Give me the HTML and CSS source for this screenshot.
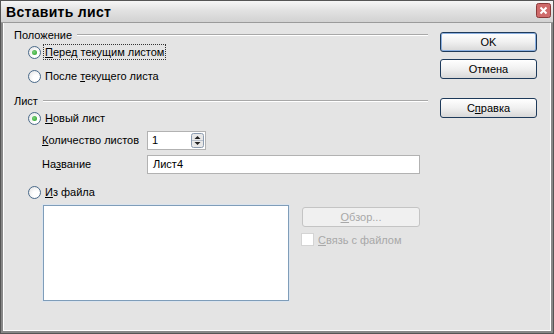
FILE: index.html
```html
<!DOCTYPE html>
<html lang="ru">
<head>
  <meta charset="UTF-8" />
  <title>Вставить лист</title>
  <link rel="stylesheet" href="styles.css">
</head>
<body>
  <div class="window">
    <div class="titlebar">
      <span class="title">Вставить лист</span>
      <span class="close-btn">
        <svg width="15" height="15" viewBox="0 0 15 15">
          <rect x="0.5" y="0.5" width="14" height="14" rx="2" fill="#cf6a6a" stroke="#8a3a3a"/>
          <path d="M4.5 4.5 L10.5 10.5 M10.5 4.5 L4.5 10.5" stroke="#fff" stroke-width="2"/>
        </svg>
      </span>
    </div>

    <div class="content">
      <div class="main">
        <div class="group-title"><span>Положение</span><i class="rule"></i></div>
        <div class="row radio-row">
          <span class="radio checked"></span>
          <span class="label focus"><u>П</u>еред текущим листом</span>
        </div>
        <div class="row radio-row r2">
          <span class="radio"></span>
          <span class="label">После <u>т</u>екущего листа</span>
        </div>

        <div class="group-title g2"><span>Лист</span><i class="rule"></i></div>
        <div class="row radio-row r3">
          <span class="radio checked"></span>
          <span class="label"><u>Н</u>овый лист</span>
        </div>
        <div class="row field-row qty">
          <span class="field-label"><u>К</u>оличество листов</span>
          <div class="spinbox">
            <span class="spin-value">1</span>
            <span class="spin-btn">
              <svg width="13" height="15" viewBox="0 0 13 15">
                <rect x="0.5" y="0.5" width="12" height="14" rx="2" fill="#e8e8e8" stroke="#8c9cb0"/>
                <line x1="1" y1="7.5" x2="12" y2="7.5" stroke="#b8c0cc"/>
                <path d="M3.5 6 L6.5 3 L9.5 6 Z" fill="#222"/>
                <path d="M3.5 9 L6.5 12 L9.5 9 Z" fill="#222"/>
              </svg>
            </span>
          </div>
        </div>
        <div class="row field-row name">
          <span class="field-label">На<u>з</u>вание</span>
          <div class="textbox">Лист4</div>
        </div>
        <div class="row radio-row r4">
          <span class="radio"></span>
          <span class="label"><u>И</u>з файла</span>
        </div>

        <div class="file-area">
          <div class="listbox"></div>
          <div class="file-side">
            <div class="btn disabled"><u>О</u>бзор...</div>
            <div class="check-row">
              <span class="checkbox"></span>
              <span><u>С</u>вязь с файлом</span>
            </div>
          </div>
        </div>
      </div>

      <div class="actions">
        <div class="btn default">OK</div>
        <div class="btn">Отмена</div>
        <div class="btn help">С<u>п</u>равка</div>
      </div>
    </div>
  </div>
</body>
</html>
```

FILE: styles.css
```css
* {
  margin: 0;
  padding: 0;
  box-sizing: border-box;
}

body {
  font-family: "Liberation Sans", Arial, sans-serif;
  font-size: 11px;
  color: #000;
  background: #e4e4e4;
}

u {
  text-decoration: underline;
  text-underline-offset: 1px;
}

.window {
  width: 554px;
  height: 334px;
  border: 1px solid #555;
  display: flex;
  flex-direction: column;
  background: #e4e4e4;
}

.titlebar {
  height: 22px;
  display: flex;
  align-items: center;
  justify-content: space-between;
  padding: 0 2px 0 5px;
  background: linear-gradient(#f6f6f6, #e2e2e2 45%, #d2d2d2);
  border-bottom: 1px solid #9a9a9a;
}

.title {
  font-weight: bold;
  font-size: 14px;
  letter-spacing: 0.3px;
}

.close-btn {
  display: flex;
  margin-top: -2px;
}

.content {
  flex: 1;
  display: flex;
  padding: 0 11px;
  border-left: 2px solid #888;
  border-right: 2px solid #888;
  border-bottom: 2px solid #888;
  box-shadow: inset 1px 0 #fff, inset -1px 0 #fff, inset 0 -1px #fff;
}

.main {
  width: 414px;
  padding-top: 5px;
  display: flex;
  flex-direction: column;
}

.group-title {
  height: 14px;
  display: flex;
  align-items: center;
  gap: 5px;
}

.group-title.g2 {
  margin-top: 8px;
}

.rule {
  flex: 1;
  height: 2px;
  border-top: 1px solid #a8a8a8;
  border-bottom: 1px solid #fff;
}

.row {
  height: 20px;
  display: flex;
  align-items: center;
}

.radio-row {
  padding-left: 14px;
  gap: 3px;
}

.r2 {
  margin-top: 4px;
}

.r3 {
  margin-top: 0;
}

.r4 {
  margin-top: 8px;
}

.radio {
  width: 13px;
  height: 13px;
  border-radius: 50%;
  border: 1px solid #4a6a8a;
  background: radial-gradient(circle at 65% 65%, #fff 30%, #e0e0e0 100%);
  display: flex;
  align-items: center;
  justify-content: center;
}

.radio.checked::after {
  content: "";
  width: 5px;
  height: 5px;
  border-radius: 50%;
  background: radial-gradient(circle at 40% 40%, #7ed07e, #21a121);
}

.label {
  padding: 1px 1px;
}

.label.focus {
  outline: 1px dotted #333;
}

.field-row {
  padding-left: 28px;
}

.qty {
  margin-top: 2px;
}

.name {
  margin-top: 4px;
}

.field-label {
  width: 105px;
  white-space: nowrap;
}

.spinbox {
  width: 59px;
  height: 19px;
  background: #fff;
  border: 1px solid #b2b2b2;
  display: flex;
  align-items: center;
  justify-content: space-between;
  padding: 0 1px 0 4px;
}

.spin-btn {
  display: flex;
}

.textbox {
  width: 273px;
  height: 19px;
  background: #fff;
  border: 1px solid #b2b2b2;
  padding: 2px 5px;
}

.file-area {
  margin-top: 3px;
  padding-left: 29px;
  display: flex;
  gap: 13px;
}

.listbox {
  width: 246px;
  height: 96px;
  background: #fff;
  border: 1px solid #7f9db9;
  box-shadow: 0 0 0 1px #dbe4ee;
}

.file-side {
  width: 118px;
  padding-top: 2px;
  display: flex;
  flex-direction: column;
  gap: 6px;
}

.btn {
  height: 20px;
  border: 1px solid #1e3a5a;
  border-radius: 3px;
  background: linear-gradient(#ffffff, #f0f0f0 50%, #d8d8d8);
  display: flex;
  align-items: center;
  justify-content: center;
}

.btn.disabled {
  border-color: #c4c4c4;
  background: #f0f0f0;
  color: #a8a8a8;
}

.check-row {
  display: flex;
  align-items: center;
  gap: 4px;
  color: #a8a8a8;
  margin-left: -1px;
}

.checkbox {
  width: 13px;
  height: 13px;
  background: #fff;
  border: 1px solid #d4d4d4;
}

.actions {
  width: 97px;
  margin-left: 12px;
  padding-top: 9px;
  display: flex;
  flex-direction: column;
  gap: 7px;
}

.btn.default {
  box-shadow: inset 0 0 0 1px #8cb0e0;
}

.btn.help {
  margin-top: 12px;
}
```
